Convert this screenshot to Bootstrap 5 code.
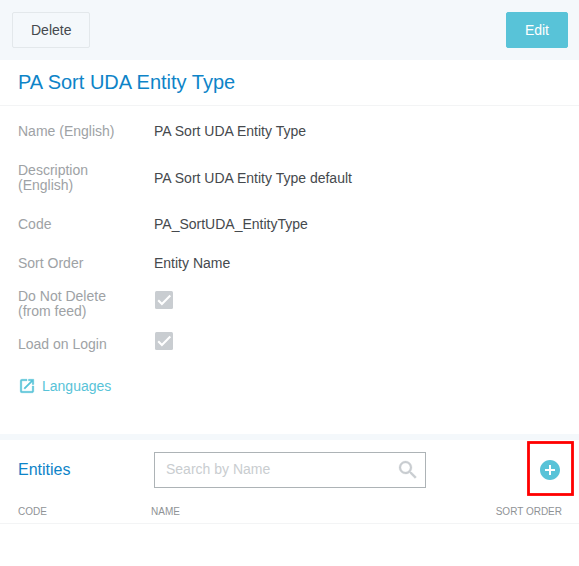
<!DOCTYPE html>
<html lang="en">
<head>
<meta charset="utf-8">
<meta name="viewport" content="width=device-width, initial-scale=1">
<title>PA Sort UDA Entity Type</title>
<link href="https://cdn.jsdelivr.net/npm/bootstrap@5.3.0/dist/css/bootstrap.min.css" rel="stylesheet">
<style>
body{font-family:"Liberation Sans",Arial,sans-serif;font-size:14px;line-height:15px;color:#45494d;background:#fff;overflow:hidden}
svg{display:block;flex:none}
.toolbar{height:60px;background:#f4f8fb;padding:0 11px 0 12px}
.toolbar .btn{height:36px;font-size:14px;line-height:15px;border-radius:2px;padding:0 18px}
.btn-delete{color:#45494d;border-color:#e3e8eb}
.btn-edit{color:#fff;background:#58c3d8;border-color:#58c3d8}
.heading{height:46px;border-bottom:1px solid #f3f4f5;padding:0 0 2px 18px;font-size:20px;line-height:24px;color:#0e84c8}
.details{padding:6px 0 0 18px;height:328px}
.field{height:39px}
.field-two{height:54px}
.field-feed{height:41px}
.field-login{height:40px}
.field dt{width:136px;padding-right:30px;font-weight:400;color:#9ea2a5}
.tick{margin:0 0 7px -2px;color:#c9cdd1}
.languages{color:#58c3d8;gap:6px;margin-top:13px;height:18px}
.entities{border-top:6px solid #f4f8fb}
.entities-bar{height:60px;padding-left:18px}
.entities-bar h2{width:136px;font-size:16px;line-height:20px;color:#0e84c8}
.search{width:272px;height:36px;border:1px solid #adb3b6;padding:0 5px 0 11px}
.search input{font-size:14px;line-height:16px;height:16px;margin-bottom:2px;color:#45494d}
.search input::placeholder{color:#c9cdd0;opacity:1}
.search svg{color:#c9cdd1}
.add{color:#58c3d8;margin:0 17px 0 auto}
.add-frame{left:526px;top:440px}
.columns{height:24px;border-bottom:1px solid #f3f4f5;padding:0 17px 0 18px;font-size:10px;line-height:12px;color:#8f9396}
.col-code{width:133px}
</style>
</head>
<body class="position-relative">
<header class="toolbar d-flex align-items-center justify-content-between">
  <button class="btn btn-delete" type="button">Delete</button>
  <button class="btn btn-edit" type="button">Edit</button>
</header>
<main>
  <h1 class="heading d-flex align-items-center fw-normal mb-0">PA Sort UDA Entity Type</h1>
  <section class="details">
    <dl class="mb-0">
      <div class="field d-flex align-items-center"><dt>Name (English)</dt><dd class="mb-0">PA Sort UDA Entity Type</dd></div>
      <div class="field field-two d-flex align-items-center"><dt>Description (English)</dt><dd class="mb-0">PA Sort UDA Entity Type default</dd></div>
      <div class="field d-flex align-items-center"><dt>Code</dt><dd class="mb-0">PA_SortUDA_EntityType</dd></div>
      <div class="field d-flex align-items-center"><dt>Sort Order</dt><dd class="mb-0">Entity Name</dd></div>
      <div class="field field-feed d-flex align-items-center"><dt>Do Not Delete (from feed)</dt><dd class="mb-0"><svg class="tick" width="24" height="24" viewBox="0 0 24 24" fill="currentColor"><rect x="3" y="3" width="18" height="18" rx="1.5"/><path d="M6.2 12.3l3.7 3.7L18.300 7.600" fill="none" stroke="#fff" stroke-width="2.1"/></svg></dd></div>
      <div class="field field-login d-flex align-items-center"><dt>Load on Login</dt><dd class="mb-0"><svg class="tick" width="24" height="24" viewBox="0 0 24 24" fill="currentColor"><rect x="3" y="3" width="18" height="18" rx="1.5"/><path d="M6.2 12.3l3.7 3.7L18.300 7.600" fill="none" stroke="#fff" stroke-width="2.1"/></svg></dd></div>
    </dl>
    <a class="languages d-flex align-items-center text-decoration-none" href="#"><svg width="18" height="18" viewBox="0 0 24 24" fill="currentColor" stroke="currentColor" stroke-width=".5"><path d="M19 19H5V5h7V3H5a2 2 0 0 0-2 2v14a2 2 0 0 0 2 2h14c1.100 0 2-.9 2-2v-7h-2v7zM14 3v2h3.590l-9.830 9.830 1.410 1.410L19 6.410V10h2V3h-7z"/></svg>Languages</a>
  </section>
  <section class="entities">
    <div class="entities-bar d-flex align-items-center">
      <h2 class="fw-normal mb-0">Entities</h2>
      <label class="search d-flex align-items-center">
        <input class="border-0 p-0 bg-transparent flex-grow-1" type="text" placeholder="Search by Name">
        <svg width="24" height="24" viewBox="0 0 24 24" fill="currentColor" stroke="currentColor" stroke-width=".3"><path d="M15.500 14h-.79l-.28-.27A6.471 6.471 0 0 0 16 9.500 6.500 6.500 0 1 0 9.500 16c1.610 0 3.090-.59 4.230-1.570l.27.28v.79l5 4.990L20.490 19l-4.990-5zm-6 0C7.010 14 5 11.990 5 9.500S7.010 5 9.500 5 14 7.010 14 9.500 11.990 14 9.500 14z"/></svg>
      </label>
      <a class="add" href="#" aria-label="Add"><svg width="24" height="24" viewBox="0 0 24 24" fill="currentColor"><path d="M12 2C6.480 2 2 6.480 2 12s4.480 10 10 10 10-4.480 10-10S17.520 2 12 2zm5 11h-4v4h-2v-4H7v-2h4V7h2v4h4v2z"/></svg></a>
    </div>
    <div class="columns d-flex align-items-center">
      <span class="col-code">CODE</span><span>NAME</span><span class="ms-auto">SORT ORDER</span>
    </div>
  </section>
</main>
<svg class="add-frame position-absolute pe-none" width="49" height="57" viewBox="0 0 49 57"><rect x="2.500" y="2.500" width="44" height="52" fill="none" stroke="#f00" stroke-width="2.800"/></svg>
<script src="https://cdn.jsdelivr.net/npm/bootstrap@5.3.0/dist/js/bootstrap.bundle.min.js"></script>
</body>
</html>
